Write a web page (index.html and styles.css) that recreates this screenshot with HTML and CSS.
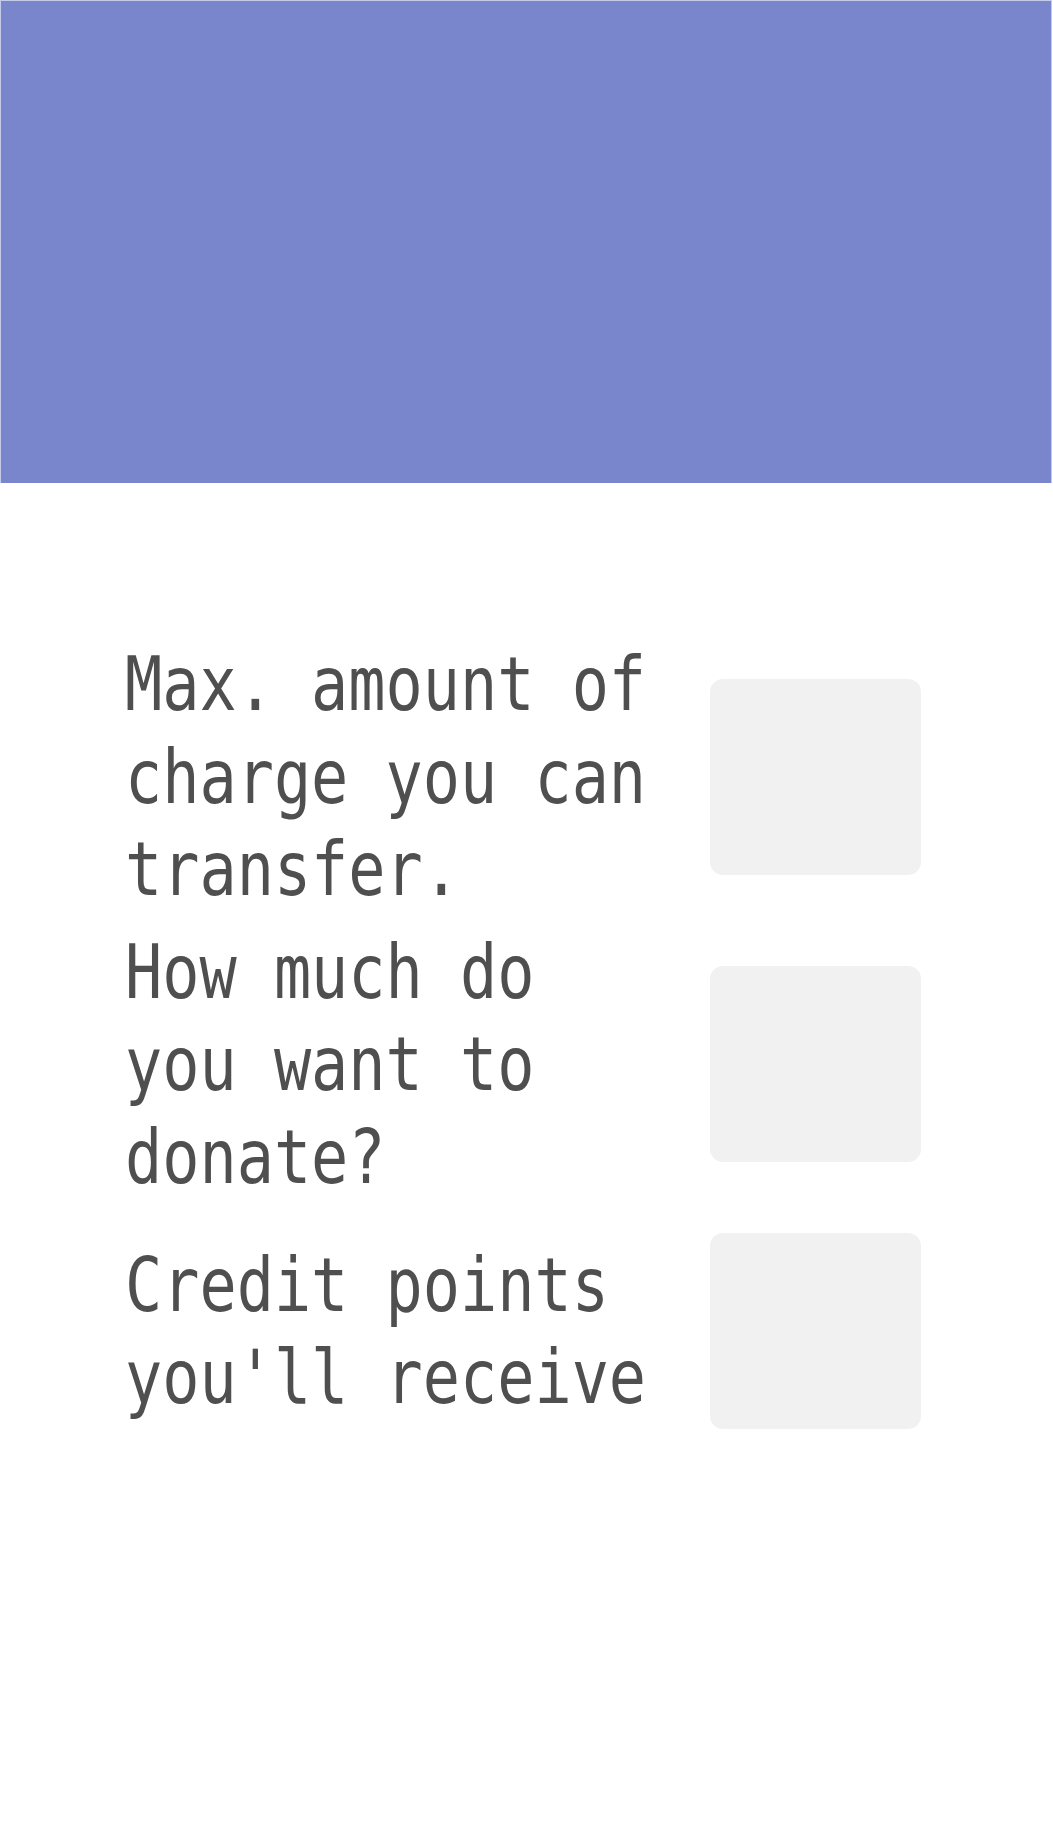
FILE: index.html
```html
<!DOCTYPE html>
<html lang="en">
<head>
<meta charset="utf-8">
<title>Donate charge</title>
<link rel="stylesheet" href="styles.css">
</head>
<body>
<header class="hero"></header>
<main class="form">
  <div class="row">
    <div class="label-wrap"><label class="label" for="max">Max. amount of charge you can transfer.</label></div>
    <input class="field" id="max" type="text">
  </div>
  <div class="row">
    <div class="label-wrap"><label class="label" for="donate">How much do you want to donate?</label></div>
    <input class="field" id="donate" type="text">
  </div>
  <div class="row">
    <div class="label-wrap"><label class="label" for="credit">Credit points you'll receive</label></div>
    <input class="field" id="credit" type="text">
  </div>
</main>
</body>
</html>
```
FILE: styles.css
```css
body {
  margin: 0;
  background: #ffffff;
  font-family: "DejaVu Sans Mono", monospace;
}

.hero {
  display: block;
  box-sizing: border-box;
  width: 1052px;
  height: 483px;
  background: #7986cb;
  border: 1px solid #c5cae9;
  border-bottom: none;
}

.form {
  display: flex;
  flex-direction: column;
  gap: 10px;
  width: 796px;
  margin: 155px 0 0 125px;
}

.row {
  display: flex;
  align-items: center;
  justify-content: space-between;
}

.label-wrap {
  flex: none;
  width: 540px;
}

.label {
  display: block;
  width: 658px;
  margin: 0;
  font-size: 75.4px;
  line-height: 92.5px;
  color: #4f4f4f;
  transform: scaleX(0.82);
  transform-origin: left center;
}

.field {
  flex: none;
  box-sizing: border-box;
  width: 211px;
  height: 196px;
  margin: 20px 0;
  padding: 0;
  border: 0;
  border-radius: 13px;
  background: #f1f1f1;
  outline: none;
}
```
